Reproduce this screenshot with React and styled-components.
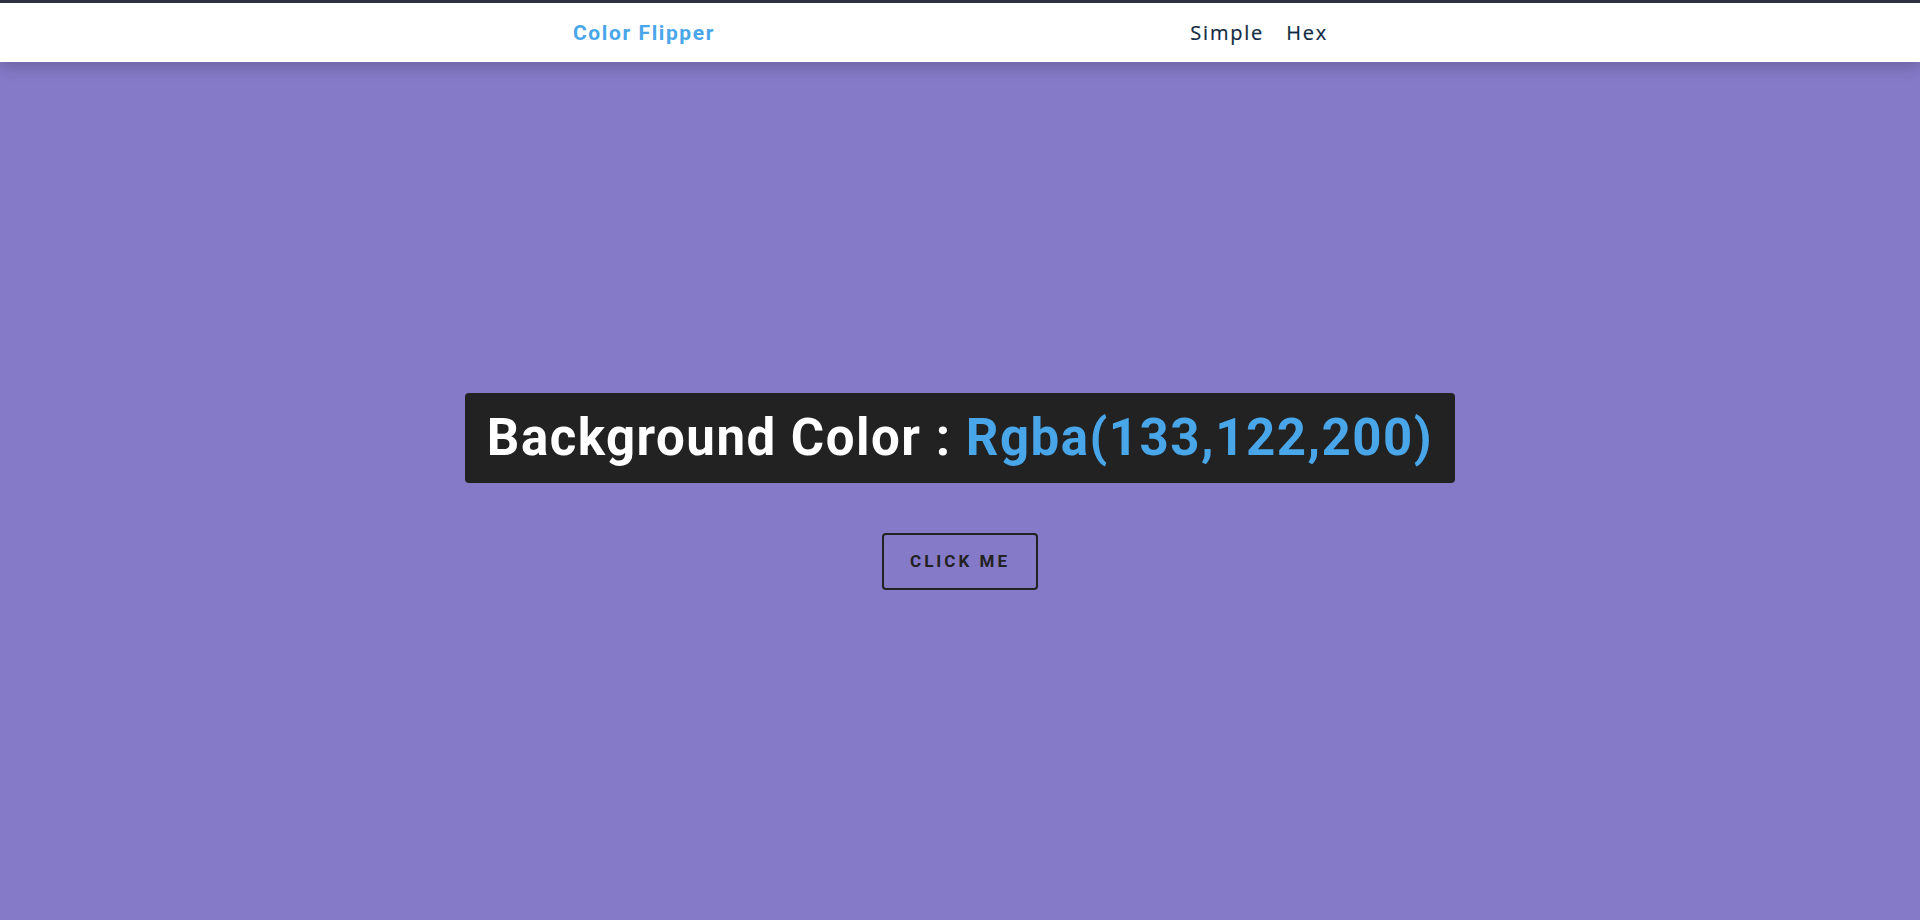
import React from "react";
import styled, { createGlobalStyle } from "styled-components";

const GlobalStyle = createGlobalStyle`
  * { box-sizing: border-box; }
  body {
    margin: 0;
    font-family: Roboto, "Liberation Sans", sans-serif;
  }
`;

const Page = styled.div`
  min-height: 100vh;
  background: rgb(133, 122, 200);
  display: flex;
  flex-direction: column;
`;

const Nav = styled.nav`
  background: #fff;
  border-top: 3px solid #2d3142;
  height: 62px;
  box-shadow: 0 5px 15px rgba(0, 0, 0, 0.2);
  display: flex;
  align-items: center;
  justify-content: center;
  position: relative;
  z-index: 1;
`;

const NavCenter = styled.div`
  width: 755px;
  display: flex;
  align-items: center;
  justify-content: space-between;
  margin-left: -19px;
`;

const Logo = styled.h4`
  margin: 0;
  font-family: Roboto, sans-serif;
  font-size: 21px;
  font-weight: 700;
  letter-spacing: 1.6px;
  color: #49a6e9;
`;

const Links = styled.ul`
  list-style: none;
  margin: 0;
  padding: 0;
  display: flex;
  gap: 22px;
`;

const LinkItem = styled.li`
  font-family: "Open Sans", sans-serif;
  font-size: 20px;
  letter-spacing: 1.8px;
  color: #102a42;
  -webkit-text-stroke: 0.2px #102a42;
`;

const Main = styled.main`
  flex: 1;
  display: flex;
  flex-direction: column;
  align-items: center;
  justify-content: center;
`;

const Heading = styled.h2`
  margin: 0 0 50px;
  background: #222;
  color: #fff;
  border-radius: 4px;
  padding: 10px 22px;
  font-family: Roboto, sans-serif;
  font-size: 51px;
  font-weight: 700;
  letter-spacing: 1.5px;
  line-height: 70px;
`;

const Value = styled.span`
  color: #49a6e9;
`;

const Button = styled.button`
  background: transparent;
  border: 2px solid #222;
  border-radius: 4px;
  color: #222;
  font-family: Roboto, sans-serif;
  font-size: 17px;
  font-weight: 700;
  letter-spacing: 3px;
  text-transform: uppercase;
  padding: 0 24px;
  height: 57px;
  width: 156px;
  cursor: pointer;
`;

export default () => (
  <Page>
    <GlobalStyle />
    <Nav>
      <NavCenter>
        <Logo>Color Flipper</Logo>
        <Links>
          <LinkItem>Simple</LinkItem>
          <LinkItem>Hex</LinkItem>
        </Links>
      </NavCenter>
    </Nav>
    <Main>
      <Heading>
        Background Color : <Value>Rgba(133,122,200)</Value>
      </Heading>
      <Button>click me</Button>
    </Main>
  </Page>
);
